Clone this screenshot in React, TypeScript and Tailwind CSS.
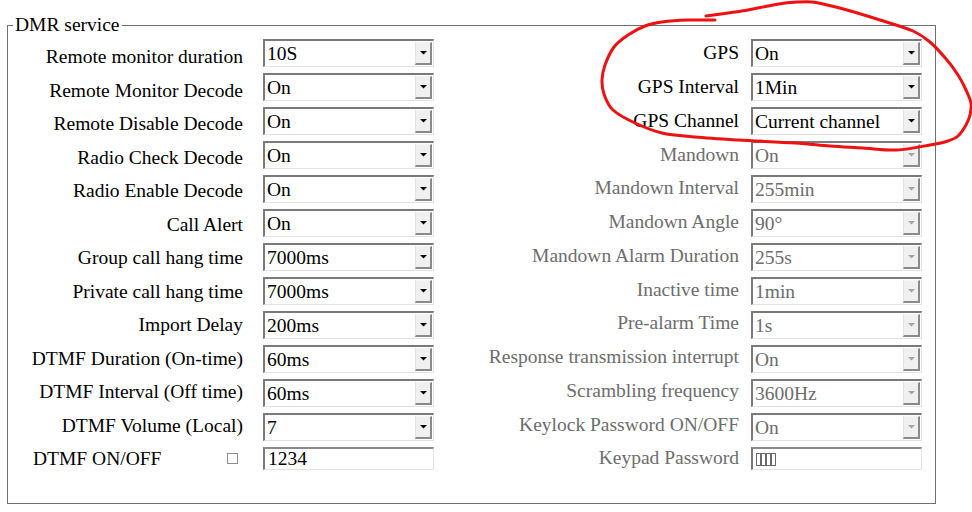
import React from 'react';

type Field = {
  label: string;
  value: string;
  kind?: 'select' | 'text' | 'password';
  disabled?: boolean;
  check?: boolean;
};

const leftFields: Field[] = [
  { label: 'Remote monitor duration', value: '10S' },
  { label: 'Remote Monitor Decode', value: 'On' },
  { label: 'Remote Disable Decode', value: 'On' },
  { label: 'Radio Check Decode', value: 'On' },
  { label: 'Radio Enable Decode', value: 'On' },
  { label: 'Call Alert', value: 'On' },
  { label: 'Group call hang time', value: '7000ms' },
  { label: 'Private call hang time', value: '7000ms' },
  { label: 'Import Delay', value: '200ms' },
  { label: 'DTMF Duration (On-time)', value: '60ms' },
  { label: 'DTMF Interval (Off time)', value: '60ms' },
  { label: 'DTMF Volume (Local)', value: '7' },
  { label: 'DTMF ON/OFF', value: '1234', kind: 'text', check: true },
];

const rightFields: Field[] = [
  { label: 'GPS', value: 'On' },
  { label: 'GPS Interval', value: '1Min' },
  { label: 'GPS Channel', value: 'Current channel' },
  { label: 'Mandown', value: 'On', disabled: true },
  { label: 'Mandown Interval', value: '255min', disabled: true },
  { label: 'Mandown Angle', value: '90°', disabled: true },
  { label: 'Mandown Alarm Duration', value: '255s', disabled: true },
  { label: 'Inactive time', value: '1min', disabled: true },
  { label: 'Pre-alarm Time', value: '1s', disabled: true },
  { label: 'Response transmission interrupt', value: 'On', disabled: true },
  { label: 'Scrambling frequency', value: '3600Hz', disabled: true },
  { label: 'Keylock Password ON/OFF', value: 'On', disabled: true },
  { label: 'Keypad Password', value: '1234', kind: 'password', disabled: true },
];

// freehand red circle drawn over the screenshot
const markPoints: [number, number][] = [
  [706, 16], [728, 13], [748, 10], [768, 6], [785, 3], [800, 2], [812, 2], [823, 4],
  [847, 10], [880, 20], [913, 31], [930, 42], [947, 60], [958, 75], [966, 90],
  [971, 103], [970, 115], [966, 125], [958, 136], [948, 141], [930, 145], [897, 150],
  [863, 148], [830, 146], [795, 143], [738, 140], [695, 137], [662, 133], [635, 123],
  [613, 110], [604, 94], [602, 80], [605, 65], [614, 47], [628, 35], [645, 26],
  [662, 22], [688, 20], [715, 20],
];

const smoothPath = (pts: [number, number][]) => {
  let d = `M${pts[0][0]},${pts[0][1]}`;
  for (let i = 0; i < pts.length - 1; i++) {
    const p0 = pts[i - 1] || pts[i];
    const p1 = pts[i];
    const p2 = pts[i + 1];
    const p3 = pts[i + 2] || p2;
    const c1x = p1[0] + (p2[0] - p0[0]) / 6;
    const c1y = p1[1] + (p2[1] - p0[1]) / 6;
    const c2x = p2[0] - (p3[0] - p1[0]) / 6;
    const c2y = p2[1] - (p3[1] - p1[1]) / 6;
    d += ` C${c1x.toFixed(1)},${c1y.toFixed(1)} ${c2x.toFixed(1)},${c2y.toFixed(1)} ${p2[0]},${p2[1]}`;
  }
  return d;
};

const Arrow = ({ disabled }: { disabled?: boolean }) => (
  <svg width="7" height="4" viewBox="0 0 7 4">
    <polygon points="0,0 7,0 3.5,3.5" fill={disabled ? '#a3a3a3' : '#000'} />
  </svg>
);

const SelectBox = ({ value, disabled }: { value: string; disabled?: boolean }) => (
  <div className="mt-[3px] flex h-[28px] w-[171px] items-stretch border-t-2 border-l-2 border-r border-b border-t-[#7a7a7a] border-l-[#7a7a7a] border-r-[#e3e3e3] border-b-[#e3e3e3] bg-white">
    <span className={`flex-1 overflow-hidden whitespace-nowrap pl-[2px] leading-[25px] ${disabled ? 'text-[#6d6d6d]' : 'text-black'}`}>
      {value}
    </span>
    <div className="my-[1px] mr-[1px] flex w-[17px] items-center justify-center border-t border-l border-r-2 border-b-2 border-t-[#f4f4f4] border-l-[#e3e3e3] border-r-[#8a8a8a] border-b-[#8a8a8a] bg-[#f0f0f0]">
      <Arrow disabled={disabled} />
    </div>
  </div>
);

const TextBox = ({ value }: { value: string }) => (
  <div className="mt-[3px] flex h-[23px] w-[171px] items-center border-t-2 border-l-2 border-r border-b border-t-[#8a8a8a] border-l-[#7a7a7a] border-r-[#e3e3e3] border-b-[#e3e3e3] bg-white pl-[3px] leading-[20px]">
    {value}
  </div>
);

const PasswordBox = ({ value }: { value: string }) => (
  <div className="mt-[3px] flex h-[23px] w-[171px] items-center border-t-2 border-l-2 border-r border-b border-t-[#8a8a8a] border-l-[#7a7a7a] border-r-[#e3e3e3] border-b-[#e3e3e3] bg-white pl-[3px]">
    {value.split('').map((_, i) => (
      <span key={i} className="inline-block h-[13px] w-[5px] border border-[#6a6a6a]" />
    ))}
  </div>
);

const Control = ({ f }: { f: Field }) => {
  if (f.kind === 'text') return <TextBox value={f.value} />;
  if (f.kind === 'password') return <PasswordBox value={f.value} />;
  return <SelectBox value={f.value} disabled={f.disabled} />;
};

export default function App() {
  return (
    <div className="relative h-[512px] w-[972px] overflow-hidden bg-white font-['Liberation_Serif',serif] text-[19.5px] text-black">
      <fieldset className="ml-[7px] mt-[14px] h-[490px] w-[929px] border border-[#707070]">
        <legend className="ml-[5px] px-[2px] leading-[22px]">DMR service</legend>
        <div className="flex items-start">
          {/* left labels */}
          <div className="flex w-[235px] flex-col">
            {leftFields.map((f) =>
              f.check ? (
                <div key={f.label} className="flex h-[33.5px] items-center justify-between pl-[25px] pr-[5px] pt-[8px]">
                  <span className="whitespace-nowrap">{f.label}</span>
                  <span className="inline-block h-[11px] w-[11px] border border-[#8f8f8f] bg-white" />
                </div>
              ) : (
                <div key={f.label} className="flex h-[33.5px] items-center justify-end whitespace-nowrap pt-[8px]">
                  {f.label}
                </div>
              )
            )}
          </div>
          {/* left controls */}
          <div className="ml-[20px] flex flex-col">
            {leftFields.map((f) => (
              <div key={f.label} className="h-[34px]">
                <Control f={f} />
              </div>
            ))}
          </div>
          {/* right labels */}
          <div className="ml-[12px] flex w-[293px] flex-col">
            {rightFields.map((f) => (
              <div
                key={f.label}
                className={`flex h-[33.75px] items-center justify-end whitespace-nowrap ${f.disabled ? 'text-[#6d6d6d]' : 'text-black'}`}
              >
                {f.label}
              </div>
            ))}
          </div>
          {/* right controls */}
          <div className="ml-[12px] flex flex-col">
            {rightFields.map((f) => (
              <div key={f.label} className="h-[34px]">
                <Control f={f} />
              </div>
            ))}
          </div>
        </div>
      </fieldset>
      <svg className="pointer-events-none absolute left-0 top-0" width="972" height="512" viewBox="0 0 972 512">
        <path d={smoothPath(markPoints)} fill="none" stroke="#ee1111" strokeWidth="3" strokeLinecap="round" strokeLinejoin="round" />
      </svg>
    </div>
  );
}
